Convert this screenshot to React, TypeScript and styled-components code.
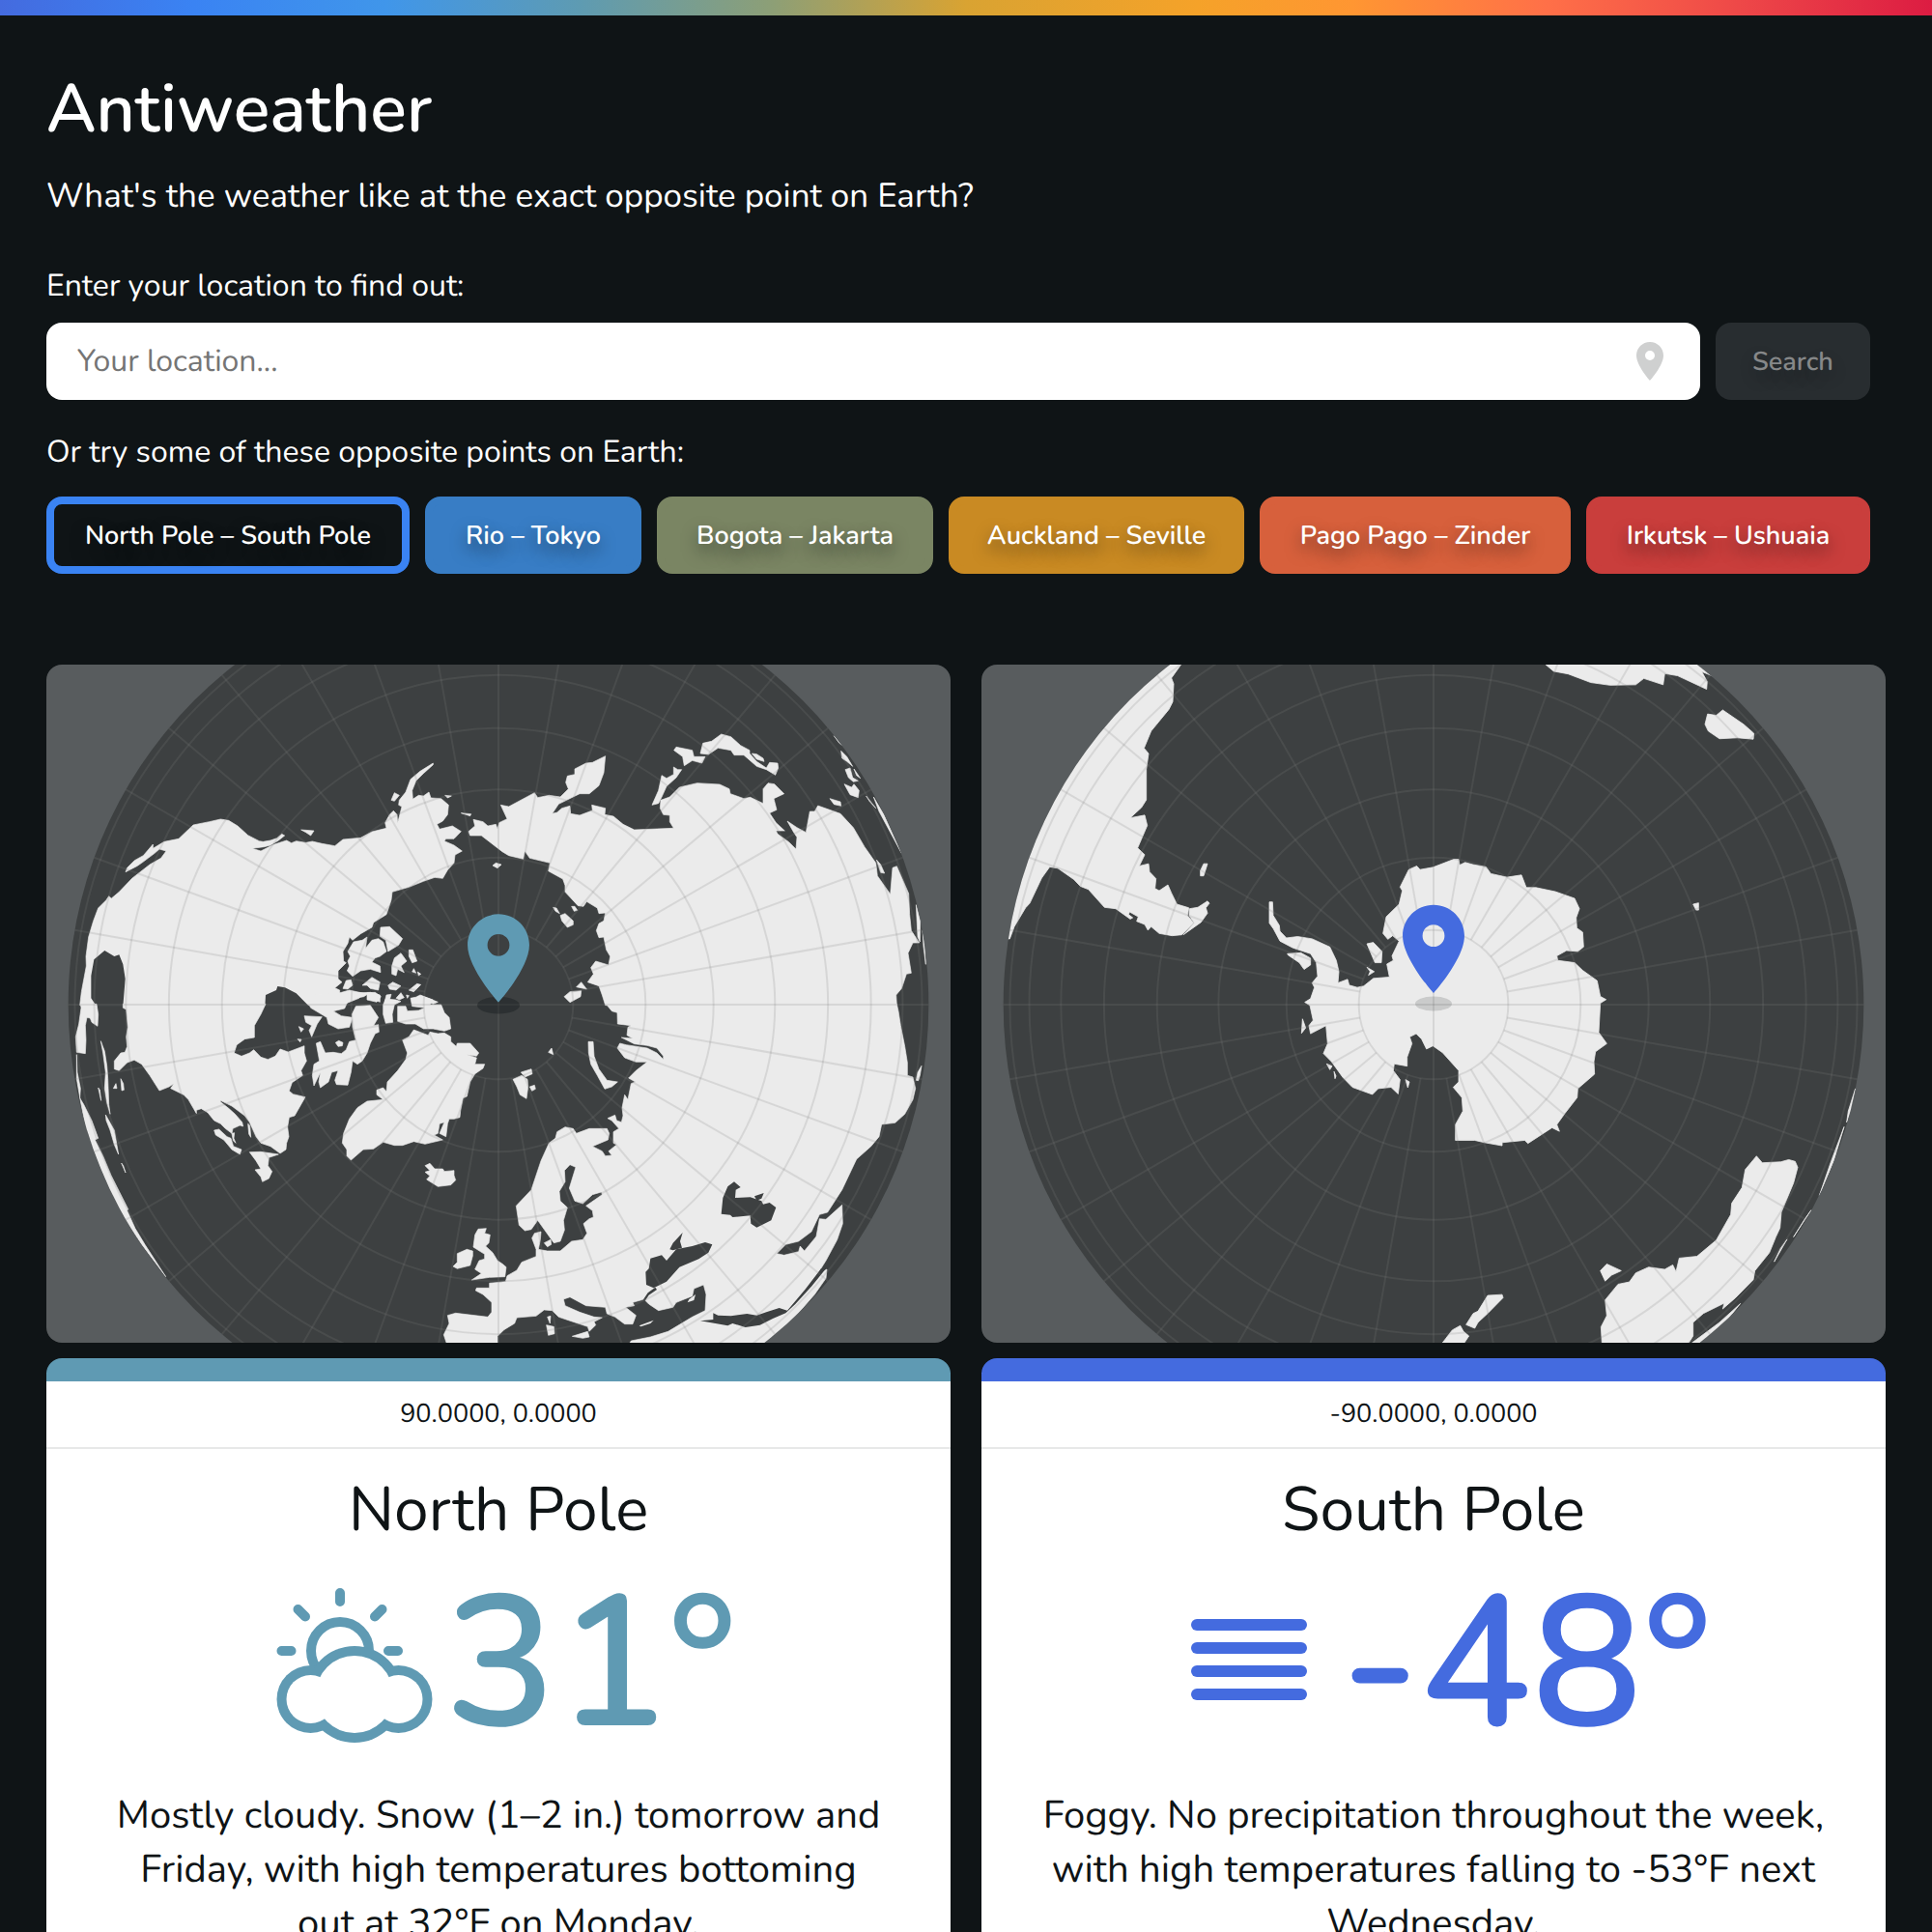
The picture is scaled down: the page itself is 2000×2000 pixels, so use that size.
import React from "react";
import styled, { createGlobalStyle } from "styled-components";

const GlobalStyle = createGlobalStyle`
  *, *::before, *::after { box-sizing: border-box; }
  body {
    margin: 0;
    background: #0f1416;
    color: #ffffff;
    font-family: Nunito, "Open Sans", "Noto Sans", sans-serif;
    text-rendering: geometricPrecision;
  }
  h1, h2, p { margin: 0; }
  button, input { font: inherit; text-rendering: inherit; }
`;

const Page = styled.div`
  height: 100vh;
  overflow-y: auto;
  scrollbar-width: none;
  background: #0f1416;
`;

const Rainbow = styled.div`
  height: 16px;
  background: linear-gradient(
    to right,
    #446bdf,
    #3a83f3 10%,
    #4096ea 20%,
    #5e9bb2 30%,
    #8d9f76 40%,
    #d9a332 50%,
    #f5a229 62%,
    #ff9632 70%,
    #ff7048 80%,
    #ee4848 90%,
    #dc1c42
  );
`;

const Header = styled.header`
  display: flex;
  flex-direction: column;
  padding: 57px 64px 0 48px;
`;

const Brand = styled.h1`
  font-size: 70px;
  line-height: 80px;
  font-weight: 600;
`;

const Tagline = styled.p`
  margin-top: 27px;
  font-size: 35px;
  line-height: 48px;
`;

const SearchForm = styled.form`
  display: flex;
  flex-direction: column;
  gap: 17px;
  margin-top: 49px;
`;

const Label = styled.label`
  font-size: 32px;
  line-height: 40px;
`;

const SearchRow = styled.div`
  display: flex;
  gap: 16px;
`;

const InputBox = styled.div`
  flex: 1;
  display: flex;
  align-items: center;
  height: 80px;
  padding: 0 28px 0 32px;
  border-radius: 16px;
  background: #ffffff;
`;

const LocationInput = styled.input`
  flex: 1;
  min-width: 0;
  padding: 0;
  border: 0;
  outline: 0;
  background: transparent;
  color: #0f1416;
  font-size: 32px;
  &::placeholder { color: #757575; opacity: 1; }
`;

const LocateButton = styled.button`
  display: flex;
  width: 48px;
  height: 48px;
  padding: 0;
  border: 0;
  background: transparent;
  color: #cfd0d0;
`;

const SearchButton = styled.button`
  width: 160px;
  border: 0;
  border-radius: 16px;
  background: #282d30;
  color: #868889;
  font-size: 27px;
  font-weight: 600;
  text-shadow: 0 8px 16px rgba(15, 20, 22, 0.3);
`;

const Presets = styled.section`
  display: flex;
  flex-direction: column;
  gap: 25px;
  margin-top: 35px;
`;

const PresetsTitle = styled.p`
  font-size: 32px;
  line-height: 40px;
`;

const PresetRow = styled.div`
  display: flex;
  gap: 16px;
`;

const PresetButton = styled.button<{ $grow: number; $color: string; $active?: boolean }>`
  flex: ${(p) => p.$grow} 1 0;
  height: 80px;
  padding: 0;
  border: 8px solid ${(p) => p.$color};
  border-radius: 16px;
  background: ${(p) => (p.$active ? "#0f1416" : p.$color)};
  color: #ffffff;
  font-size: 27px;
  font-weight: 600;
  white-space: nowrap;
  text-shadow: 0 8px 16px rgba(15, 20, 22, 0.5);
`;

const Columns = styled.main`
  display: grid;
  grid-template-columns: 1fr 1fr;
  gap: 32px;
  padding: 94px 48px 48px;
`;

const Column = styled.article`
  display: flex;
  flex-direction: column;
  gap: 16px;
  min-width: 0;
`;

const MapPanel = styled.div`
  height: 702px;
  border-radius: 16px;
  overflow: hidden;
  background: #585c5e;
`;

const MapDrawing = styled.svg`
  display: block;
  width: 100%;
  height: 100%;
`;

const Card = styled.section<{ $accent: string }>`
  border-top: 24px solid ${(p) => p.$accent};
  border-radius: 16px;
  background: #ffffff;
  color: #0f1416;
  text-align: center;
`;

const Coordinates = styled.p`
  height: 70px;
  border-bottom: 2px solid #e7e8e8;
  font-size: 27px;
  line-height: 68px;
`;

const CardBody = styled.div`
  padding: 23px 63px 64px;
`;

const Place = styled.h2`
  font-size: 64px;
  line-height: 80px;
  font-weight: 400;
`;

const Reading = styled.div<{ $accent: string }>`
  display: flex;
  justify-content: center;
  margin-top: 24px;
  color: ${(p) => p.$accent};
`;

const WeatherIcon = styled.svg`
  width: 192px;
  height: 192px;
`;

const Temperature = styled.span`
  font-size: 192px;
  line-height: 192px;
  font-weight: 650;
`;

const Summary = styled.p`
  margin-top: 33px;
  font-size: 40px;
  line-height: 56px;
`;

const PIN_PATH =
  "M12 2C8.13 2 5 5.13 5 9c0 5.25 7 13 7 13s7-7.75 7-13c0-3.87-3.13-7-7-7zm0 9.5a2.5 2.5 0 0 1 0-5 2.5 2.5 0 0 1 0 5z";

const RADIUS = 1336;

function Graticule({ cx, cy }: { cx: number; cy: number }) {
  const rings = [10, 20, 30, 40, 50, 60, 70, 80];
  const spokes = Array.from({ length: 36 }, (_, i) => i * 10);
  const inner = RADIUS * Math.sin(Math.PI / 18);
  return (
    <g fill="none" stroke="#7e7e7e" strokeOpacity="0.19" strokeWidth="6">
      {rings.map((deg) => (
        <circle key={deg} cx={cx} cy={cy} r={RADIUS * Math.sin((deg * Math.PI) / 180)} />
      ))}
      {spokes.map((deg) => {
        const a = (deg * Math.PI) / 180;
        const start = deg % 90 === 0 ? 0 : inner;
        return (
          <line
            key={deg}
            x1={cx + start * Math.cos(a)}
            y1={cy + start * Math.sin(a)}
            x2={cx + RADIUS * Math.cos(a)}
            y2={cy + RADIUS * Math.sin(a)}
          />
        );
      })}
    </g>
  );
}

type MapPinProps = {
  x: number;
  y: number;
  color: string;
  shadowY: number;
  shadowRx: number;
  shadowOpacity: number;
};

function MapPin({ x, y, color, shadowY, shadowRx, shadowOpacity }: MapPinProps) {
  return (
    <>
      <ellipse cx={x} cy={shadowY} rx={shadowRx} ry={shadowRx * 0.4} fill="#0f1416" fillOpacity={shadowOpacity} />
      <g transform={`translate(${x - 12 * 13.7} ${y - 22 * 13.7}) scale(13.7)`}>
        <path d={PIN_PATH} fill={color} />
      </g>
    </>
  );
}

const SEA = "#3d4041";
const LAND = "#ebebeb";

type Tile = { transform: string; land: string[]; water?: string[]; islets?: string[] };

const ARCTIC: Tile[] = [
  {
    transform: "translate(0 0)",
    land: [
      "128,1082 133,1040 148,960 147,930 155,870 170,820 185,780 210,755 218,743 226,750 250,730 290,688 300,680 345,645 380,625 396,603 375,597 360,610 340,625 320,640 305,650 270,668 275,655 298,632 325,617 355,582 355,595 390,574 435,565 480,522 530,512 565,504 590,508 618,525 650,554 685,572 697,574 720,570 740,563 755,550 764,555 745,570 720,585 700,590 663,595 690,603 730,583 770,570 785,578 800,572 830,577 850,573 880,580 920,587 945,567 1000,562 1035,543 1080,532 1076,515 1090,490 1102,478 1113,490 1115,515 1128,465 1118,460 1120,445 1140,420 1155,380 1185,355 1225,330 1225,335 1195,362 1172,385 1160,415 1162,442 1180,430 1195,432 1212,420 1218,438 1250,440 1273,460 1270,490 1255,510 1237,520 1245,535 1285,525 1312,542 1290,565 1265,565 1260,572 1290,585 1315,603 1293,615 1290,640 1270,662 1255,688 1230,685 1195,697 1150,715 1098,730 1095,755 1080,800 1040,825 1035,840 1000,860 975,880 965,870 960,890 945,915 947,945 955,950 930,975 930,1000 942,1010 920,1028 935,1035 935,1082",
      "978,885 1005,880 1020,870 1015,905 1035,880 1055,875 1070,885 1080,915 1060,930 1045,935 1035,948 1060,960 1062,980 1030,970 1000,975 975,992 958,975 965,960 960,945 968,930 960,915",
      "1062,840 1090,838 1130,875 1118,895 1085,915 1078,880 1060,868",
      "1105,935 1125,920 1143,945 1125,960 1135,980 1115,970 1110,990 1097,985 1097,960",
      "1150,910 1162,910 1175,945 1160,950 1150,930",
      "1165,968 1172,982 1160,978",
      "1177,978 1187,985 1180,990",
      "955,1005 970,1003 975,1020 960,1032 945,1030",
      "1005,1020 1035,995 1060,1010 1055,1035 1030,1030 1020,1020",
      "1085,1020 1100,1010 1125,1022 1110,1035 1090,1032",
      "1175,1015 1187,1018 1165,1040 1150,1035",
      "930,1045 965,1035 1010,1045 995,1060 970,1070 940,1082 930,1082",
      "1020,1043 1045,1042 1063,1055 1050,1072 1020,1065",
      "1080,1050 1095,1048 1090,1065 1075,1070",
      "1110,1060 1125,1043 1135,1058 1120,1065",
      "1142,1050 1150,1052 1145,1060",
      "1095,445 1105,422 1120,430 1105,448",
      "815,537 855,540 845,555 830,545",
      "1262,430 1282,432 1270,438",
      "1312,485 1343,488 1340,494",
    ],
    water: [
      "163,990 172,940 205,912 235,930 250,925 262,955 269,1000 262,1085 180,1085 163,1060",
      "705,1050 738,1035 742,1023 765,1027 800,1045 840,1085 703,1085",
    ],
  },
  {
    transform: "translate(1380 0)",
    land: [
      "-45,542 -25,525 -30,505 0,512 15,525 40,520 45,535 50,515 75,503 55,460 80,465 160,422 170,437 205,430 240,435 265,410 257,390 262,370 285,365 285,348 320,330 340,328 380,308 375,360 360,400 330,425 300,425 235,457 215,487 230,483 245,470 270,463 272,487 300,492 340,477 338,460 380,470 378,490 405,495 435,520 470,537 592,532 580,512 580,492 560,490 550,470 552,445 580,435 610,405 665,392 735,396 765,410 768,425 810,440 830,436 870,455 870,410 885,392 905,395 935,425 903,440 912,475 890,485 910,515 937,540 910,540 915,550 950,575 972,597 975,560 965,545 945,510 975,530 1003,545 1015,480 1030,480 1040,462 1110,487 1150,530 1185,590 1220,640 1225,680 1265,737 1272,655 1285,650 1322,735 1325,800 1330,850 1355,888 1335,888 1320,920 1330,982 1315,985 1300,1030 1283,1050 1285,1082 380,1082 370,1050 360,1022 325,1010 343,985 335,965 350,945 390,957 395,930 383,910 375,870 360,872 352,850 360,828 375,820 380,795 360,797 355,780 322,760 312,775 295,773 255,730 255,710 248,690 203,665 208,640 145,625 130,603 125,628 80,617 60,605 -5,555 -40,555",
      "525,460 545,415 555,368 570,377 592,365 592,342 605,350 617,350 600,375 570,402 555,435 545,455",
      "593,290 600,280 650,290 655,310 690,310 680,330 650,322 625,338 620,310",
      "675,300 683,268 710,262 740,240 770,248 800,275 828,290 828,300 850,325 880,345 890,328 915,330 917,345 908,367 880,350 850,340 810,305 780,305 770,290 730,283 700,303",
      "835,300 850,302 870,315 873,325 850,318",
      "1077,440 1110,450 1112,463 1090,458",
      "1112,292 1130,310 1148,340 1130,325 1115,315",
      "1125,350 1140,345 1148,375 1165,385 1150,388 1135,375",
      "1122,395 1145,405 1152,395 1168,415 1165,437 1140,428",
      "1152,348 1172,377 1160,368",
      "1090,245 1115,275 1105,266",
      "1213,435 1245,490 1290,590 1300,610 1265,545 1230,480",
      "1190,432 1220,470 1200,448",
      "1222,630 1235,645 1247,672 1235,670",
      "1345,770 1358,820 1357,885 1350,870",
      "1365,850 1372,900 1375,955 1368,900",
      "218,778 228,780 238,797 225,790",
      "240,803 255,797 280,820 280,832 262,840 245,820",
      "275,775 285,775 293,787 283,790",
      "290,1025 305,1010 322,1032",
      "252,1055 270,1040 305,1037 303,1055 270,1073",
      "30,648 40,640 57,645 45,656",
    ],
  },
  {
    transform: "translate(0 1050)",
    land: [
      "130,28 132,40 125,90 115,130 118,178 145,182 147,140 145,95 150,70 160,72 165,85 183,97 185,60 180,28",
      "262,28 262,40 272,45 277,100 272,130 275,160 268,178 255,180 235,205 235,230 250,235 275,210 297,202 320,215 345,250 375,297 405,285 420,275 410,290 450,310 465,325 490,368 490,358 505,353 525,365 545,390 565,400 580,415 600,430 603,415 625,405 635,408 632,395 610,370 590,352 565,332 565,328 600,345 640,375 655,395 675,440 690,460 720,470 750,492 768,480 770,460 777,440 773,410 778,380 795,375 828,317 790,308 778,298 787,272 820,250 815,235 832,205 825,180 825,158 775,177 750,168 735,190 712,200 690,193 668,170 655,180 630,190 607,180 615,155 640,137 670,132 670,95 690,60 705,28",
      "810,0 1030,-8 1010,5 985,10 960,20 950,42 915,50 940,65 975,70 965,100 930,105 900,90 895,70 845,40 835,20 820,12",
      "1030,-8 1060,0 1060,22 1035,12",
      "985,35 1030,32 1055,70 1040,95 1055,92 1057,115 1045,120 1030,150 1020,180 1005,205 990,215 975,205 970,240 960,280 925,278 920,265 930,235 910,240 900,270 875,288 870,270 875,240 855,282 850,250 855,215 872,205 862,150 875,145 890,180 915,178 940,182 955,170 965,145 985,140 975,100 973,60",
      "922,148 932,142 945,148 943,158 930,160",
      "825,65 880,68 865,90 848,130 840,110 848,95 830,85",
      "808,98 823,105 815,115",
      "804,137 816,138 812,146",
      "545,420 560,417 585,440 597,445 605,470 630,480 625,495 600,480 575,450 550,435",
      "600,430 608,428 606,445 612,460 604,452",
      "655,488 690,487 745,495 715,505 712,530 725,548 715,570 695,580 690,565 672,543 690,540 675,515",
      "650,400 656,405 659,442 653,432",
      "240,275 243,290 232,290",
      "255,260 263,275 265,295 258,297",
      "193,143 205,175 212,220 215,260 218,340 222,370 212,335 205,290 208,240 200,180",
      "185,288 190,295 194,328",
      "208,372 235,420 248,495 235,465 222,420 210,390",
      "257,522 263,530 270,552",
      "118,185 120,240 130,290 128,320 140,340 165,390 185,445 175,450 200,500 225,560 250,610 278,665 275,670 300,725 330,775 395,875 320,775 270,700 225,615 185,520 150,430 130,330 118,260",
      "1130,140 1150,130 1165,108 1210,125 1215,115 1240,120 1260,118 1280,130 1280,145 1297,160 1300,150 1340,150 1367,180 1360,190 1330,185 1360,195 1355,215 1385,215 1380,228 1355,245 1340,270 1330,315 1318,320 1310,360 1308,380 1290,385 1275,385 1270,400 1265,440 1245,430 1260,395 1245,400 1240,430 1228,435 1255,450 1200,463 1165,455 1130,467 1105,467 1070,457 1040,478 1008,480 970,513 957,500 957,480 943,460 947,430 965,385 990,350 1020,330 1070,325 1050,310 1050,295 1070,288 1080,300 1083,270 1115,235 1140,200 1145,180",
      "1155,10 1190,3 1225,15 1215,30 1250,30 1260,55 1275,70 1280,105 1260,112 1225,105 1195,105 1170,90 1140,90 1115,82 1115,35 1140,35 1145,50 1180,48 1200,40 1160,35",
      "1070,30 1078,12 1110,15 1125,20 1105,30 1098,60 1100,85 1078,88 1070,60",
      "1200,530 1215,523 1230,540 1255,540 1260,548 1290,545 1290,560 1295,575 1280,590 1240,595 1205,573 1215,562 1200,550 1215,545",
      "1365,727 1390,725 1385,740 1402,745 1398,770 1388,780 1410,800 1425,825 1440,835 1452,845 1448,875 1400,877 1345,885 1375,865 1355,852 1368,825 1385,820 1385,805 1350,783 1355,745",
      "1300,803 1330,790 1348,795 1348,810 1340,840 1300,850 1287,843 1300,830",
      "1175,5 1185,0 1240,22 1225,28",
    ],
  },
  {
    transform: "translate(1380 1050)",
    land: [
      "1285,28 1290,50 1297,95 1310,160 1318,210 1318,250 1335,255 1343,290 1335,325 1310,370 1280,397 1238,402 1230,440 1205,470 1160,510 1115,605 1070,675 1045,682 1020,735 980,765 940,775 912,803 935,808 980,797 985,780 998,795 1035,750 1045,695 1065,697 1115,652 1117,710 1100,760 1065,825 1040,865 1068,852 1065,880 1030,930 960,1010 878,1085 453,1085 460,1074 520,1062 575,1045 650,1000 690,980 693,930 685,900 655,912 650,935 600,955 590,970 545,980 515,960 500,945 465,955 470,965 443,970 475,995 465,1022 440,1022 410,1000 385,990 380,970 320,965 270,938 250,945 255,965 300,985 345,1000 370,1002 345,1015 350,1025 330,1045 325,1030 265,1010 235,1000 215,980 190,978 165,997 105,1002 98,1020 65,1040 45,1060 45,1085 -112,1085 -122,1055 -105,1020 -110,995 -85,988 15,1000 27,985 27,955 0,930 -23,918 -20,910 20,910 20,895 70,890 75,872 105,855 120,830 165,812 165,790 152,755 160,740 180,735 178,760 172,790 200,795 240,795 275,765 310,760 323,740 312,710 330,695 343,690 340,670 320,655 370,620 368,612 340,620 310,648 285,640 268,600 288,535 270,527 253,545 255,580 237,610 240,640 262,660 250,700 253,730 240,765 220,770 170,700 150,728 130,732 112,715 103,655 150,605 180,515 205,460 225,445 230,425 255,410 280,415 290,430 330,415 385,415 392,430 388,450 340,470 370,485 380,500 400,498 390,485 415,465 405,460 405,425 422,415 400,390 387,383 410,373 415,390 430,395 435,375 432,350 440,310 450,325 460,275 473,270 452,258 475,235 510,208 475,208 440,195 417,165 425,150 445,155 510,165 540,180 560,200 560,190 540,165 510,157 470,152 430,132 465,135 447,125 450,100 460,95 418,90 417,55 400,50 382,28",
      "93,262 120,250 138,262 140,285 135,322 115,310 105,285",
      "118,240 150,230 153,245 130,255",
      "145,285 160,280 163,292 152,298",
      "203,178 213,165 218,185",
      "327,145 342,145 345,190 360,230 385,265 418,270 400,285 378,292 355,250 335,215 328,180",
      "1345,265 1350,240 1362,220 1357,250 1352,266",
      "190,770 210,760 212,775 200,782",
      "200,1000 210,997 208,1020",
      "197,1025 220,1030 222,1052 203,1057",
      "277,1060 325,1045 330,1062 310,1066",
    ],
    water: [
      "1065,850 1020,905 970,960 940,988 900,1005 860,1025 815,1032 775,1020 760,1027 675,1012 715,1008 715,988 730,995 770,997 820,990 850,995 880,985 920,972 945,980 1000,915 1050,850",
      "520,818 555,808 570,825 600,790 650,780 690,768 712,775 700,800 670,820 610,845 570,890 530,910 507,900 505,860 515,850",
      "580,790 590,770 620,738 612,765 618,785 590,793",
      "535,908 540,915 515,932 503,950 495,950 512,925",
      "740,680 745,630 760,595 780,580 800,597 785,605 783,630 830,628 865,640 870,650 890,645 910,660 895,700 850,722 832,710 830,685 775,690 768,683",
      "843,625 872,615 865,632 850,638",
    ],
    islets: ["635,955 640,945 660,930 655,948", "485,1027 530,1010 520,1020 490,1030"],
  },
];

const ANTARCTIC: Tile[] = [
  {
    transform: "scale(1 1.3966)",
    land: [
      "638,17 608,47 615,60 612,100 600,117 545,165 523,203 537,215 530,250 530,318 515,335 480,358 525,352 533,375 503,425 525,440 508,465 537,460 540,478 560,493 557,515 570,520 597,507 608,525 625,550 662,558 658,575 677,592 640,618 610,620 570,615 545,600 535,608 525,595 500,588 505,578 478,567 475,573 488,580 480,583 435,560 400,557 350,517 325,510 305,495 255,470 230,467 205,492 168,548 155,558 120,600 106,627 98,627 40,500 150,250 400,80 590,0 640,0",
      "664,560 690,557 720,543 726,548 715,558 720,570 700,590 645,618 679,592 663,575",
      "698,475 708,460 720,460 708,487 698,487",
      "912,545 922,545 924,575 943,597 945,610 965,625 1000,622 1045,627 1100,645 1120,675 1128,700 1125,725 1155,717 1160,730 1185,735 1205,732 1235,715 1285,712 1277,683 1297,675 1293,665 1315,632 1295,620 1280,628 1265,615 1275,578 1315,550 1325,520 1318,512 1345,473 1370,465 1380,473 1420,468 1485,450 1500,450 1503,463 1520,457 1545,462 1585,467 1600,482 1650,490 1695,485 1710,513 1740,513 1800,522 1860,537 1875,560 1865,580 1867,603 1885,612 1888,645 1870,655 1835,653 1805,665 1808,675 1860,680 1885,697 1930,720 1940,755 1958,762 1940,770 1935,835 1960,860 1925,878 1920,900 1922,928 1870,960 1868,980 1830,1015 1805,1040 1813,1055 1790,1047 1715,1082 1705,1075 1635,1080 1635,1087 1580,1080 1550,1075 1490,1075 1490,1040 1513,1010 1510,980 1483,957 1500,945 1500,920 1450,880 1420,865 1400,872 1385,850 1368,838 1348,845 1355,860 1340,890 1340,910 1300,905 1297,920 1318,940 1312,972 1290,957 1250,960 1232,973 1170,957 1140,935 1105,900 1080,882 1093,860 1088,820 1040,838 1035,820 1048,808 1038,775 1022,768 1040,760 1052,735 1045,725 1062,710 1058,680 1040,660 985,647 945,632 925,605 912,592",
      "968,660 1010,658 1040,670 1040,685 1020,695 1005,680 970,663",
      "1215,638 1235,635 1262,655 1260,680 1240,680",
      "1215,690 1238,700 1220,708 1225,700",
      "1015,805 1025,825 1012,837",
      "1090,905 1107,910 1100,918",
      "1113,922 1119,932 1116,938",
      "1335,940 1347,945 1342,958",
    ],
  },
  {
    transform: "translate(1440 0) scale(1 1.3966)",
    land: [
      "10,1525 40,1497 65,1487 75,1500 92,1510 78,1525",
      "83,1485 105,1460 120,1455 150,1420 195,1418 198,1425 150,1460 120,1480 110,1493",
      "505,1525 502,1490 520,1465 515,1430 555,1395 590,1390 610,1370 650,1357 700,1362 725,1352 735,1367 745,1337 800,1333 860,1297 905,1240 908,1215 940,1180 950,1140 985,1110 1003,1125 1060,1123 1085,1118 1105,1122 1113,1135 1100,1170 1062,1235 1058,1270 1045,1290 1025,1325 980,1365 975,1385 920,1425 880,1450 885,1437 820,1460 788,1480 788,1510 775,1525",
      "500,1365 520,1350 565,1365 535,1375 515,1388",
      "330,17 355,32 400,38 470,57 530,63 610,62 635,48 695,62 700,37 740,42 830,72 832,55 815,33 850,43 800,15 800,0 330,0",
      "825,150 833,127 860,130 880,118 945,150 977,170 975,183 925,180 870,182 835,165",
      "788,550 805,547 805,563 797,563",
      "1292,960 1283,1000 1265,1035 1270,1010",
      "1257,1045 1225,1120 1180,1198 1215,1125",
      "1155,1230 1100,1290 1135,1250",
      "1080,1295 1040,1345 1060,1315",
      "935,1438 870,1480 785,1525 810,1525 880,1487",
    ],
  },
];

function Globe({ id, title, viewBox, cx, cy, tiles, children }: {
  id: string;
  title: string;
  viewBox: string;
  cx: number;
  cy: number;
  tiles: Tile[];
  children: React.ReactNode;
}) {
  return (
    <MapPanel>
      <MapDrawing viewBox={viewBox} preserveAspectRatio="xMidYMid slice" role="img" aria-label={title}>
        <clipPath id={id}>
          <circle cx={cx} cy={cy} r={RADIUS} />
        </clipPath>
        <circle cx={cx} cy={cy} r={RADIUS} fill={SEA} />
        <g clipPath={`url(#${id})`} strokeLinejoin="round">
          {tiles.map((tile) => (
            <g key={tile.transform} transform={tile.transform}>
              {tile.land.map((points) => (
                <polygon key={points} points={points} fill={LAND} stroke={LAND} strokeWidth="2" />
              ))}
              {tile.water?.map((points) => <polygon key={points} points={points} fill={SEA} />)}
              {tile.islets?.map((points) => <polygon key={points} points={points} fill={LAND} />)}
            </g>
          ))}
        </g>
        <Graticule cx={cx} cy={cy} />
        {children}
      </MapDrawing>
    </MapPanel>
  );
}

function PartlyCloudy() {
  return (
    <WeatherIcon viewBox="0 11 192 192" aria-hidden="true">
      <g fill="none" stroke="currentColor" strokeWidth="10" strokeLinecap="round">
        <path d="M83 33v9M22.500 93h10M133 93h10M39.500 50l7.500 7.500M126.500 50l-7.500 7.500" />
        <circle cx="83" cy="93" r="30" />
      </g>
      <g fill="currentColor">
        <circle cx="52.500" cy="143" r="35" />
        <circle cx="143.500" cy="143" r="35" />
        <circle cx="98" cy="138" r="50" />
      </g>
      <g fill="#ffffff">
        <circle cx="52.500" cy="143" r="25" />
        <circle cx="143.500" cy="143" r="25" />
        <circle cx="98" cy="138" r="40" />
      </g>
    </WeatherIcon>
  );
}

function Fog() {
  return (
    <WeatherIcon viewBox="0 11 192 192" aria-hidden="true">
      {[60, 84, 108, 132].map((y) => (
        <rect key={y} x="37" y={y} width="120" height="12" rx="6" fill="currentColor" />
      ))}
    </WeatherIcon>
  );
}

const PRESETS = [
  { label: "North Pole – South Pole", grow: 360, color: "#3a83f3", active: true },
  { label: "Rio – Tokyo", grow: 208, color: "#387dc5" },
  { label: "Bogota – Jakarta", grow: 270, color: "#7a8563" },
  { label: "Auckland – Seville", grow: 290, color: "#c98a23" },
  { label: "Pago Pago – Zinder", grow: 306, color: "#d7603c" },
  { label: "Irkutsk – Ushuaia", grow: 278, color: "#c93e3c" },
];

const TEAL = "#5f9ab3";
const BLUE = "#446bdf";

export default function App() {
  return (
    <Page>
      <GlobalStyle />
      <Rainbow />
      <Header>
        <Brand>Antiweather</Brand>
        <Tagline>What's the weather like at the exact opposite point on Earth?</Tagline>
        <SearchForm onSubmit={(event) => event.preventDefault()}>
          <Label htmlFor="location">Enter your location to find out:</Label>
          <SearchRow>
            <InputBox>
              <LocationInput id="location" type="text" placeholder="Your location..." />
              <LocateButton type="button" aria-label="Use my location">
                <svg viewBox="0 0 24 24" width="48" height="48" fill="currentColor" aria-hidden="true">
                  <path d={PIN_PATH} />
                </svg>
              </LocateButton>
            </InputBox>
            <SearchButton type="submit">Search</SearchButton>
          </SearchRow>
        </SearchForm>
        <Presets>
          <PresetsTitle>Or try some of these opposite points on Earth:</PresetsTitle>
          <PresetRow>
            {PRESETS.map((preset) => (
              <PresetButton
                key={preset.label}
                type="button"
                $grow={preset.grow}
                $color={preset.color}
                $active={preset.active}
              >
                {preset.label}
              </PresetButton>
            ))}
          </PresetRow>
        </Presets>
      </Header>
      <Columns>
        <Column>
          <Globe id="arctic" title="Map of the North Pole" viewBox="24 24 2808 2106" cx={1428} cy={1080} tiles={ARCTIC}>
            <MapPin x={1428} y={1073} color={TEAL} shadowY={1082} shadowRx={66} shadowOpacity={0.35} />
          </Globe>
          <Card $accent={TEAL}>
            <Coordinates>90.0000, 0.0000</Coordinates>
            <CardBody>
              <Place>North Pole</Place>
              <Reading $accent={TEAL}>
                <PartlyCloudy />
                <Temperature>31°</Temperature>
              </Reading>
              <Summary>
                Mostly cloudy. Snow (1–2 in.) tomorrow and Friday, with high temperatures bottoming out at 32°F on Monday.
              </Summary>
            </CardBody>
          </Card>
        </Column>
        <Column>
          <Globe id="antarctic" title="Map of the South Pole" viewBox="18 24 2808 2106" cx={1422} cy={1080} tiles={ANTARCTIC}>
            <MapPin x={1422} y={1044} color={BLUE} shadowY={1077} shadowRx={57} shadowOpacity={0.15} />
          </Globe>
          <Card $accent={BLUE}>
            <Coordinates>-90.0000, 0.0000</Coordinates>
            <CardBody>
              <Place>South Pole</Place>
              <Reading $accent={BLUE}>
                <Fog />
                <Temperature>-48°</Temperature>
              </Reading>
              <Summary>
                Foggy. No precipitation throughout the week, with high temperatures falling to -53°F next Wednesday.
              </Summary>
            </CardBody>
          </Card>
        </Column>
      </Columns>
    </Page>
  );
}
